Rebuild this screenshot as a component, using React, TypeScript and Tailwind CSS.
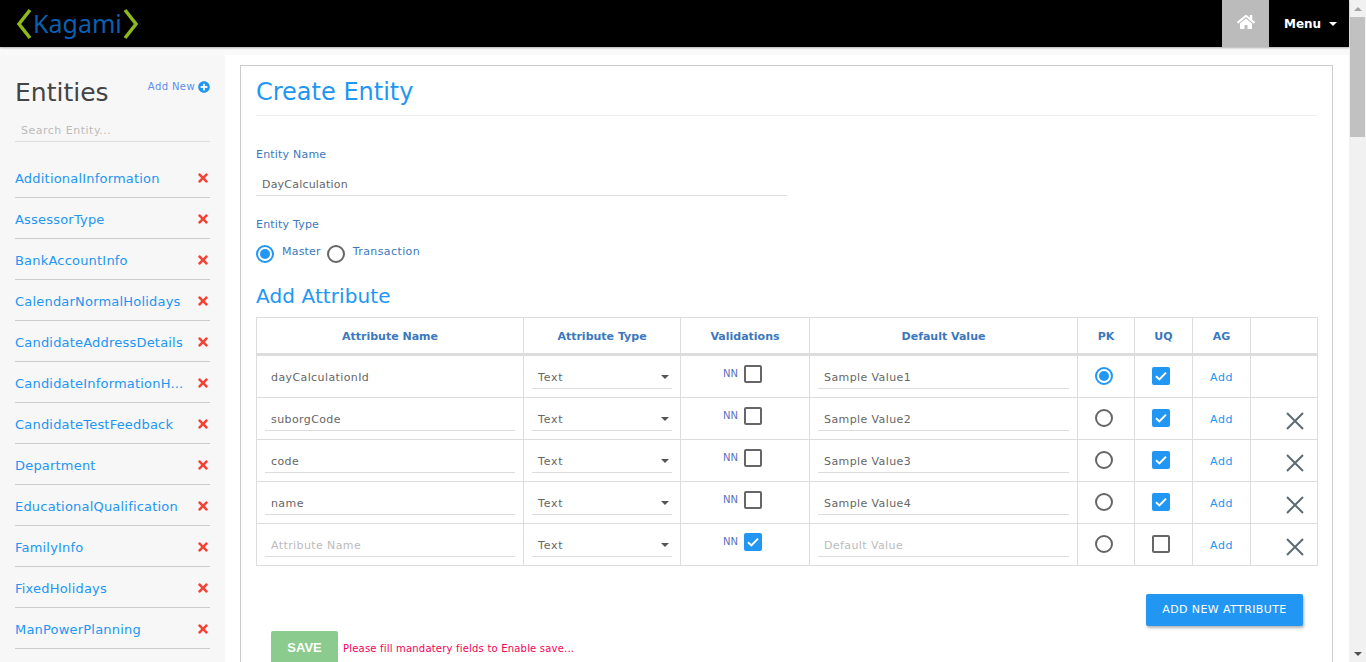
import { FaHome, FaPlusCircle, FaTimes } from 'react-icons/fa';

const entities = [
  'AdditionalInformation',
  'AssessorType',
  'BankAccountInfo',
  'CalendarNormalHolidays',
  'CandidateAddressDetails',
  'CandidateInformationH...',
  'CandidateTestFeedback',
  'Department',
  'EducationalQualification',
  'FamilyInfo',
  'FixedHolidays',
  'ManPowerPlanning',
];

interface Attr {
  name: string;
  value: string;
  nn?: boolean;
  pk?: boolean;
  uq?: boolean;
  fixed?: boolean;
}

const attributes: Attr[] = [
  { name: 'dayCalculationId', value: 'Sample Value1', pk: true, uq: true, fixed: true },
  { name: 'suborgCode', value: 'Sample Value2', uq: true },
  { name: 'code', value: 'Sample Value3', uq: true },
  { name: 'name', value: 'Sample Value4', uq: true },
  { name: '', value: '', nn: true },
];

function Radio({ checked }: { checked?: boolean }) {
  return (
    <span
      className={`w-[18px] h-[18px] rounded-full border-2 flex items-center justify-center ${
        checked ? 'border-[#2196f3]' : 'border-[#666666]'
      }`}
    >
      {checked && <span className="w-[10px] h-[10px] rounded-full bg-[#2196f3]" />}
    </span>
  );
}

function Checkbox({ checked }: { checked?: boolean }) {
  if (checked) {
    return (
      <span className="w-[18px] h-[18px] rounded-[2px] bg-[#2196f3] flex items-center justify-center">
        <svg width="12" height="10" viewBox="0 0 12 10" fill="none">
          <path d="M1 5.2 L4.4 8.4 L11 1.6" stroke="#fff" strokeWidth="2" />
        </svg>
      </span>
    );
  }
  return <span className="w-[18px] h-[18px] rounded-[2px] border-2 border-[#666666]" />;
}

function CloseIcon() {
  return (
    <svg width="20" height="20" viewBox="0 0 20 20" fill="none">
      <path d="M2 2 L18 18 M18 2 L2 18" stroke="#5f6b73" strokeWidth="2" />
    </svg>
  );
}

function Th({ children, className }: { children?: React.ReactNode; className: string }) {
  return (
    <th className={`h-[37px] pt-[3px] border border-[#dddddd] border-b-[3px] text-center text-[11px] font-bold text-[#3b78bd] ${className}`}>
      {children}
    </th>
  );
}

function UnderlineField({ text, placeholder }: { text: string; placeholder: string }) {
  return (
    <div className={`mx-2 h-[22px] pt-[2px] mt-[11px] mb-[8px] border-b border-[#dddddd] pl-[6px] flex items-center text-[11px] tracking-[0.4px] ${text ? 'text-[#666666]' : 'text-[#bbbbbb]'}`}>
      {text || placeholder}
    </div>
  );
}

export default function App() {
  return (
    <div className="h-screen flex overflow-hidden bg-white font-['DejaVu_Sans',sans-serif]">
      <div className="flex-1 min-w-0 flex flex-col">
        {/* Top bar */}
        <header className="h-[47px] shrink-0 bg-black flex items-center justify-between shadow-[0_1px_2px_rgba(0,0,0,0.3)] z-10">
          <div className="flex items-center pl-[16px]">
            <svg width="16" height="32" viewBox="0 0 16 32" fill="none">
              <path d="M14 2 L3 16 L14 30" stroke="#8fb91a" strokeWidth="3.5" />
            </svg>
            <span className="text-[25px] leading-none text-[#0b5fb0] font-['Noto_Sans',sans-serif] mx-[1px] pb-[1px]">Kagami</span>
            <svg width="16" height="32" viewBox="0 0 16 32" fill="none">
              <path d="M2 2 L13 16 L2 30" stroke="#8fb91a" strokeWidth="3.5" />
            </svg>
          </div>
          <div className="flex h-full">
            <div className="w-[47px] bg-[#bbbbbb] flex items-start justify-center pt-[13px]">
              <FaHome className="text-white text-[18px]" />
            </div>
            <div className="w-[80px] flex items-center pl-[15px] gap-[8px] text-white text-[12px] font-bold">
              Menu
              <span className="w-0 h-0 border-x-[4px] border-x-transparent border-t-[4px] border-t-white" />
            </div>
          </div>
        </header>

        <div className="flex-1 min-h-0 flex bg-[#f9f9f9] pt-[8px]">
          {/* Entities list */}
          <aside className="w-[225px] shrink-0 bg-[#f7f7f7] pl-[15px] pr-[15px] pt-[20px]">
            <div className="flex items-start justify-between h-[34px]">
              <h2 className="text-[25px] leading-[36px] text-[#444444]">Entities</h2>
              <div className="flex items-center gap-[3px] text-[10px] text-[#5b8def] tracking-[0.4px] mt-[4px]">
                Add New <FaPlusCircle className="text-[#2196f3] text-[12px]" />
              </div>
            </div>
            <div className="mt-[12px] h-[21px] border-b border-[#dddddd] pl-[6px] flex items-center text-[11px] text-[#bbbbbb] tracking-[0.5px]">
              Search Entity...
            </div>
            <ul className="mt-[15px]">
              {entities.map((entity) => (
                <li key={entity} className="h-[41px] pt-[2px] border-b border-[#cccccc] flex items-center justify-between text-[13px] text-[#2196f3] tracking-[0.2px]">
                  <span className="mt-[2px]">{entity}</span>
                  <FaTimes className="text-[#f44336] text-[14px]" />
                </li>
              ))}
            </ul>
          </aside>

          {/* Main area */}
          <main className="flex-1 min-w-0 bg-white pl-[15px] pr-[16px] pt-[10px]">
            <div className="border border-[#cccccc] border-b-0 h-[700px] pl-[15px] pr-[14px]">
              <h1 className="h-[50px] border-b border-[#eeeeee] text-[24px] leading-[52px] text-[#2196f3]">
                Create Entity
              </h1>
              <div className="mt-[32px] text-[11px] leading-[13px] text-[#3b78bd] tracking-[0.2px]">Entity Name</div>
              <div className="mt-[14px] w-[531px] h-[21px] border-b border-[#dddddd] pl-[6px] flex items-center text-[11px] text-[#666666] tracking-[0.2px]">
                DayCalculation
              </div>
              <div className="mt-[22px] text-[11px] leading-[13px] text-[#3b78bd] tracking-[0.2px]">Entity Type</div>
              <div className="mt-[14px] h-[18px] flex items-center text-[11px] text-[#3b78bd] tracking-[0.2px]">
                <Radio checked />
                <span className="ml-[8px] mr-[6px] -mt-[3px]">Master</span>
                <Radio />
                <span className="ml-[8px] -mt-[3px] tracking-[0.4px]">Transaction</span>
              </div>
              <h2 className="mt-[19px] h-[28px] text-[20px] leading-[28px] text-[#2196f3] tracking-[0.1px]">Add Attribute</h2>

              <table className="mt-[7px] w-[1061px] table-fixed border-collapse">
                <thead>
                  <tr>
                    <Th className="w-[267px]">Attribute Name</Th>
                    <Th className="w-[157px]">Attribute Type</Th>
                    <Th className="w-[129px]">Validations</Th>
                    <Th className="w-[268px]">Default Value</Th>
                    <Th className="w-[57px]">PK</Th>
                    <Th className="w-[58px]">UQ</Th>
                    <Th className="w-[58px]">AG</Th>
                    <Th className="w-[67px]" />
                  </tr>
                </thead>
                <tbody>
                  {attributes.map((attr, i) => (
                    <tr key={i} className="h-[42px]">
                      <td className="border border-[#dddddd] p-0">
                        {attr.fixed ? (
                          <div className="pl-[14px] pt-[4px] text-[11px] text-[#666666] tracking-[0.4px]">{attr.name}</div>
                        ) : (
                          <UnderlineField text={attr.name} placeholder="Attribute Name" />
                        )}
                      </td>
                      <td className="border border-[#dddddd] p-0">
                        <div className="mx-2 h-[22px] pt-[2px] mt-[11px] mb-[8px] border-b border-[#dddddd] pl-[6px] pr-[3px] flex items-center justify-between text-[11px] text-[#666666] tracking-[0.8px]">
                          Text
                          <span className="w-0 h-0 mb-[3px] border-x-[4px] border-x-transparent border-t-[4px] border-t-[#555555]" />
                        </div>
                      </td>
                      <td className="border border-[#dddddd] p-0">
                        <div className="flex items-start justify-center gap-[6px] pr-[5px] mb-[6px] text-[10px] text-[#5a6fc0]">
                          <span className="mt-[1px]">NN</span>
                          <Checkbox checked={attr.nn} />
                        </div>
                      </td>
                      <td className="border border-[#dddddd] p-0">
                        <UnderlineField text={attr.value} placeholder="Default Value" />
                      </td>
                      <td className="border border-[#dddddd] p-0">
                        <div className="flex justify-center pr-[5px] mb-[2px]">
                          <Radio checked={attr.pk} />
                        </div>
                      </td>
                      <td className="border border-[#dddddd] p-0">
                        <div className="flex justify-center pr-[5px] mb-[2px]">
                          <Checkbox checked={attr.uq} />
                        </div>
                      </td>
                      <td className="border border-[#dddddd] p-0 pt-[3px] text-center text-[11px] text-[#2196f3] tracking-[0.5px]">Add</td>
                      <td className="border border-[#dddddd] p-0">
                        {!attr.fixed && (
                          <div className="flex justify-end pr-[12px] pt-[5px]">
                            <CloseIcon />
                          </div>
                        )}
                      </td>
                    </tr>
                  ))}
                </tbody>
              </table>

              <div className="mt-[28px] flex justify-end pr-[15px]">
                <button className="w-[157px] h-[32px] rounded-[2px] bg-[#2196f3] text-white text-[11px] font-medium tracking-[0.4px] shadow-[1px_2px_3px_rgba(0,0,0,0.3)]">
                  ADD NEW ATTRIBUTE
                </button>
              </div>

              <div className="mt-[5px] ml-[15px] flex items-center gap-[5px]">
                <button className="w-[67px] h-[34px] rounded-[2px] bg-[#8bcb8d] text-white text-[13px] font-bold font-['Liberation_Sans',sans-serif]">
                  SAVE
                </button>
                <span className="text-[10px] text-[#f50057] tracking-[0.2px] mt-[1px]">
                  Please fill mandatery fields to Enable save...
                </span>
              </div>
            </div>
          </main>
        </div>
      </div>

      {/* Scrollbar */}
      <div className="w-[17px] shrink-0 bg-[#f1f1f1] flex flex-col items-center">
        <div className="h-[17px] w-full flex items-center justify-center">
          <span className="w-0 h-0 border-x-[4px] border-x-transparent border-b-[4px] border-b-[#a3a3a3]" />
        </div>
        <div className="w-[15px] h-[120px] bg-[#c1c1c1]" />
        <div className="flex-1" />
        <div className="h-[17px] w-full flex items-center justify-center">
          <span className="w-0 h-0 border-x-[4px] border-x-transparent border-t-[4px] border-t-[#505050]" />
        </div>
      </div>
    </div>
  );
}
